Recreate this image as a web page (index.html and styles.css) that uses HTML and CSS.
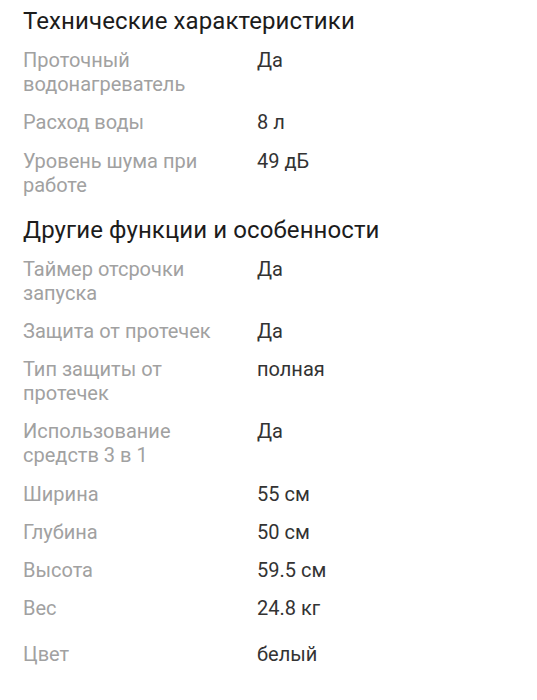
FILE: index.html
```html
<!DOCTYPE html>
<html lang="ru">
<head>
<meta charset="utf-8">
<link rel="stylesheet" href="styles.css">
</head>
<body>
<main class="specs">
  <section class="group">
    <h2 class="group-title">Технические характеристики</h2>
    <dl class="rows">
      <div class="row"><dt>Проточный водонагреватель</dt><dd>Да</dd></div>
      <div class="row"><dt>Расход воды</dt><dd>8 л</dd></div>
      <div class="row"><dt>Уровень шума при работе</dt><dd>49 дБ</dd></div>
    </dl>
  </section>
  <section class="group">
    <h2 class="group-title">Другие функции и особенности</h2>
    <dl class="rows">
      <div class="row"><dt>Таймер отсрочки запуска</dt><dd>Да</dd></div>
      <div class="row"><dt>Защита от протечек</dt><dd>Да</dd></div>
      <div class="row"><dt>Тип защиты от протечек</dt><dd>полная</dd></div>
      <div class="row"><dt>Использование средств 3 в 1</dt><dd>Да</dd></div>
      <div class="row"><dt>Ширина</dt><dd>55 см</dd></div>
      <div class="row"><dt>Глубина</dt><dd>50 см</dd></div>
      <div class="row"><dt>Высота</dt><dd>59.5 см</dd></div>
      <div class="row"><dt>Вес</dt><dd>24.8 кг</dd></div>
      <div class="row row-last"><dt>Цвет</dt><dd>белый</dd></div>
    </dl>
  </section>
</main>
</body>
</html>
```
FILE: styles.css
```css
html, body {
  margin: 0;
  padding: 0;
  background: #fff;
}
body {
  font-family: Roboto, "Noto Sans", sans-serif;
  -webkit-font-smoothing: antialiased;
}
.specs {
  padding: 6px 23px 0 23px;
  display: flex;
  flex-direction: column;
  gap: 18px;
}
.group-title {
  margin: 0;
  font-size: 24px;
  font-weight: 400;
  line-height: 30px;
  color: #1c1c1c;
  letter-spacing: 0.1px;
}
.rows {
  margin: 12px 0 0 0;
  display: flex;
  flex-direction: column;
  gap: 14.25px;
}
.row {
  display: flex;
  font-size: 20px;
  line-height: 24px;
}
.row dt {
  width: 214px;
  margin-right: 20px;
  color: #a1a1a1;
}
.row dd {
  margin: 0;
  color: #333;
}
.row-last {
  margin-top: 7.5px;
}
```
